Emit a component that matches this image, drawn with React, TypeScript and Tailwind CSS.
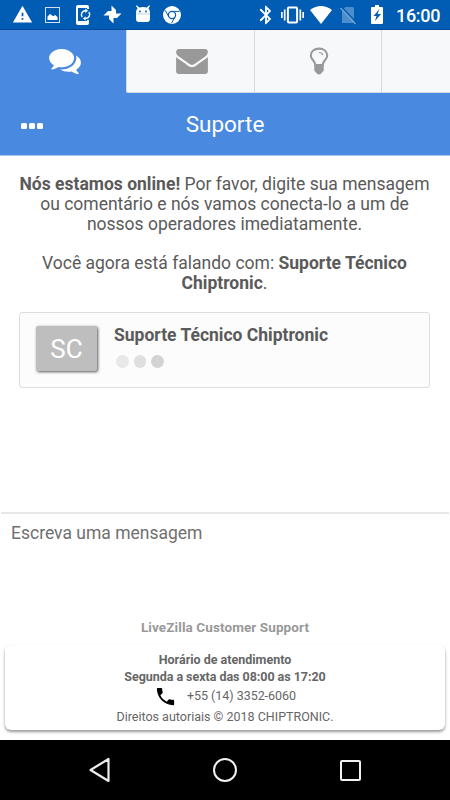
import React from "react";
import { MdWarning, MdBluetooth, MdPhone } from "react-icons/md";

function StatusBar() {
  return (
    <header className="flex h-[30px] shrink-0 items-start border-b border-[#00489a] bg-[#005db3] pl-[12px] pr-[8px] text-white">
      <MdWarning className="mt-[4px] size-[21px]" />
      <svg className="ml-[12px] mt-[7px] h-[16px] w-[15px]" viewBox="0 0 15 16">
        <rect x=".5" y=".5" width="14" height="15" fill="none" stroke="#cfe1f2" />
        <path d="M2.500 13V9.500L5 7l3.200 2.300 2-1.300 2.300 2v3z" fill="#fff" />
      </svg>
      <svg className="ml-[16px] mt-[5px] h-[20px] w-[16px]" viewBox="0 0 16 20">
        <path d="M2 0h9q2 0 2 2v2h-2V3H2v13h9v-1h2v3q0 2-2 2H2q-2 0-2-2V2Q0 0 2 0z" fill="#fff" />
        <path d="M6.200 12.200a4 4 0 0 1 3.500-6.400M12.800 7a4 4 0 0 1-3.500 6.500" fill="none" stroke="#fff" strokeWidth="1.400" />
        <path d="M9.300 3.600 12 5.800 9.300 8zM9.600 11.300v4.400L7 13.500z" fill="#fff" />
      </svg>
      <svg className="ml-[11px] mt-[5px] size-[19px]" viewBox="0 0 19 19" fill="#fff">
        <path d="M8.500 10V0.500L13 5V10z" />
        <path d="M8.500 10V0.500L13 5V10z" transform="rotate(90 9.500 9.500)" />
        <path d="M8.500 10V0.500L13 5V10z" transform="rotate(180 9.500 9.500)" />
        <path d="M8.500 10V0.500L13 5V10z" transform="rotate(270 9.500 9.500)" />
      </svg>
      <svg className="ml-[13px] mt-[5px] h-[17px] w-[16px]" viewBox="0 0 16 17">
        <path d="M1 7.500q0-2.500 1.500-4.200L1 .9l.8-.7 2.300 2.200q3.900-1 7.800 0L14.200.2l.8.700-1.500 2.400Q15 5 15 7.500V14q0 3-3 3H4q-3 0-3-3z" fill="#fff" />
        <circle cx="5" cy="6.500" r=".9" fill="#005db3" />
        <circle cx="11" cy="6.500" r=".9" fill="#005db3" />
        <path d="M1 9h14" stroke="#8fb8de" strokeWidth=".6" />
      </svg>
      <svg className="ml-[12px] mt-[6px] size-[18px]" viewBox="0 0 18 18">
        <circle cx="9" cy="9" r="9" fill="#fff" />
        <circle cx="9" cy="9" r="3.600" fill="#fff" stroke="#005db3" strokeWidth="1.200" />
        <path d="M9 5.400h7.500M5.900 10.800 2.200 4.400M12.100 10.800 8.500 17.200" stroke="#005db3" strokeWidth="1" />
      </svg>
      <span className="flex-1" />
      <MdBluetooth className="mt-[4px] size-[22px]" />
      <svg className="ml-[4px] mt-[6px] h-[18px] w-[23px]" viewBox="0 0 23 18">
        <rect x="6.900" y="1.500" width="9.200" height="15" rx="1" fill="none" stroke="#fff" strokeWidth="2" />
        <path d="M3.700 3.500v11M.8 6v6M19.300 3.500v11M22.200 6v6" stroke="#fff" strokeWidth="1.700" />
      </svg>
      <svg className="ml-[6px] mt-[6px] h-[18px] w-[22px]" viewBox="0 0 22 18">
        <path d="M0 4Q11-4 22 4L11 18z" fill="#fff" />
      </svg>
      <svg className="ml-[8px] mt-[6px] h-[19px] w-[17px]" viewBox="0 0 17 19">
        <path d="M2 4.500 5.500 1H12.500q1.500 0 1.500 1.500V16q0 1-1 1H2z" fill="#4d8dcb" />
        <path d="M1.500 1 17 17" stroke="#005db3" strokeWidth="1.500" />
        <path d="M.5 2 15.500 18" stroke="#71a5d7" strokeWidth="1.300" />
      </svg>
      <svg className="ml-[14px] mt-[5px] h-[19px] w-[12px]" viewBox="0 0 12 19">
        <path d="M1 2h3V0h4v2h3q1 0 1 1v15q0 1-1 1H1q-1 0-1-1V3q0-1 1-1z" fill="#fff" />
        <path d="M8.500 4 2.500 11h3L4 16l6-7H6.500z" fill="#005db3" />
      </svg>
      <span className="ml-[13px] mt-[5px] w-[46px] whitespace-nowrap text-[18px] font-medium leading-[21px] tracking-[-0.300px]">16:00</span>
    </header>
  );
}

function Tabs() {
  return (
    <nav className="flex h-[63px] shrink-0 bg-[#4a89e0]">
      <div className="flex w-[126px] justify-center pl-[3px] pt-[19px]">
        <svg className="h-[25px] w-[32px] text-white" viewBox="0 256 1792 1408" fill="currentColor">
          <path d="M1408 768q0 139-94 257t-256.500 186.500-353.500 68.500q-86 0-176-16-124 88-278 128-36 9-86 16h-3q-11 0-20.500-8t-11.500-21q-1-3-1-6.500t.5-6.500 2-6l2.500-5 3.500-5.500 4-5 4.500-5 4-4.500q5-6 23-25t26-29.500 22.500-29 25-38.500 20.500-44q-124-72-195-177t-71-224q0-139 94-257t256.500-186.500 353.500-68.500 353.500 68.500 256.500 186.500 94 257zm384 256q0 120-71 224.500t-195 176.500q10 24 20.500 44t25 38.500 22.500 29 26 29.500 23 25q1 1 4 4.500t4.500 5 4 5 3.500 5.500l2.500 5 2 6 .5 6.500-1 6.500q-3 14-13 22t-22 7q-50-7-86-16-154-40-278-128-90 16-176 16-271 0-472-132 58 4 88 4 161 0 309-45t264-129q125-92 192-212t67-254q0-77-23-152 129 71 204 178t75 230z" />
        </svg>
      </div>
      <div className="flex w-[129px] justify-center rounded-bl-[2px] border-b border-l border-r border-[#d5dae2] bg-[#f6f8fa] pt-[19px]">
        <svg className="ml-[3px] h-[25px] w-[32px] text-[#999]" viewBox="0 256 1792 1408" fill="currentColor">
          <path d="M1792 710v794q0 66-47 113t-113 47h-1472q-66 0-113-47t-47-113v-794q44 49 101 87 362 246 497 345 57 42 92.500 65.500t94.500 48 110 24.500h2q51 0 110-24.500t94.500-48 92.500-65.500q170-123 498-345 57-39 100-87zm0-294q0 79-49 151t-122 123q-376 261-468 325-10 7-42.500 31t-54 38.500-52 32.500-57.500 27-50 9h-2q-23 0-50-9t-57.500-27-52-32.500-54-38.500-42.500-31q-91-64-262-182.500t-205-142.500q-62-42-117-115.500t-55-136.500q0-78 41.500-130t118.500-52h1472q65 0 112.500 47t47.500 113z" />
        </svg>
      </div>
      <div className="flex w-[127px] justify-center border-b border-r border-[#d5dae2] bg-[#f6f8fa] pt-[17px]">
        <svg className="ml-[2px] h-[28px] w-[20px]" viewBox="0 0 20 28">
          <path d="M6.300 18C6.300 13.500 1.800 13 1.800 8.500C1.800 4.300 5.300 1.600 10 1.600s8.200 2.700 8.200 6.900c0 4.500-4.500 5-4.500 9.500z" fill="none" stroke="#999" strokeWidth="2.100" />
          <path d="M10 5.500q3.200 0 3.700 2.600" fill="none" stroke="#999" strokeWidth="1.200" />
          <path d="M5.300 17.500h9.400v6.300l-1.700 1.700q-1 2-3 2t-3-2l-1.700-1.700z" fill="#999" />
        </svg>
      </div>
      <div className="flex-1 border-b border-[#d5dae2] bg-[#f6f8fa]" />
    </nav>
  );
}

function TitleBar() {
  return (
    <div className="flex h-[63px] shrink-0 items-center border-b border-[#a5c4ef] bg-[#4a89e0] px-[21px] text-white">
      <div className="mt-[4px] flex w-[60px] gap-[2px]">
        <i className="size-[6px] rounded-[1.500px] bg-white" />
        <i className="size-[6px] rounded-[1.500px] bg-white" />
        <i className="size-[6px] rounded-[1.500px] bg-white" />
      </div>
      <h1 className="flex-1 pr-[60px] text-center text-[22.500px] leading-[30px]">Suporte</h1>
    </div>
  );
}

function Conversation() {
  return (
    <main className="flex h-[356px] shrink-0 flex-col px-[19px] pt-[18px] text-[#5a5a5a]">
      <div className="flex flex-col items-center whitespace-nowrap pr-[1px] text-[17.500px] leading-[20px]">
        <p>
          <b>Nós estamos online!</b> Por favor, digite sua mensagem
        </p>
        <p>ou comentário e nós vamos conecta-lo a um de</p>
        <p>nossos operadores imediatamente.</p>
        <p className="mt-[19px]">
          Você agora está falando com: <b>Suporte Técnico</b>
        </p>
        <p>
          <b>Chiptronic</b>.
        </p>
      </div>
      <section className="mt-[19px] flex h-[76px] w-[411px] shrink-0 rounded-[3px] border border-[#dedede] bg-[#fcfcfc] pl-[16px] pt-[13px]">
        <div className="flex h-[45px] w-[61px] items-center justify-center rounded-[2px] bg-[#bebebe] pt-[1px] text-[26px] text-white shadow-[1px_1px_3px_#555]">SC</div>
        <div className="ml-[17px]">
          <h2 className="-mt-px whitespace-nowrap text-[17.500px] font-bold leading-[20px]">Suporte Técnico Chiptronic</h2>
          <div className="ml-[2px] mt-[10px] flex gap-[5px]">
            <i className="size-[12.500px] rounded-full bg-[#e8e8e8]" />
            <i className="size-[12.500px] rounded-full bg-[#dfdfdf]" />
            <i className="size-[12.500px] rounded-full bg-[#d3d3d3]" />
          </div>
        </div>
      </section>
    </main>
  );
}

function Footer() {
  return (
    <footer className="flex h-[228px] shrink-0 flex-col items-center whitespace-nowrap text-[#666]">
      <div className="h-[2px] w-[448px] shrink-0 bg-[#e8e8e8]" />
      <div className="h-[104px] w-full shrink-0 pl-[11px] pt-[9px] text-[17.500px] leading-[20px] text-[#707070]">Escreva uma mensagem</div>
      <p className="text-[13.500px] font-bold leading-[18px] tracking-[0.100px] text-[#999]">LiveZilla Customer Support</p>
      <div className="mt-[9px] flex h-[85px] w-[440px] shrink-0 flex-col items-center rounded-[6px] bg-white pt-[6px] text-[12.500px] shadow-[0_2px_3px_#999]">
        <p className="font-bold leading-[17px]">Horário de atendimento</p>
        <p className="font-bold leading-[18px] tracking-[-0.040px]">Segunda a sexta das 08:00 as 17:20</p>
        <div className="flex h-[21px] items-center">
          <MdPhone className="mr-[10px] size-[23px] text-black" />
          <span className="tracking-[-0.040px]">+55 (14) 3352-6060</span>
        </div>
        <p className="leading-[20px]">Direitos autoriais © 2018 CHIPTRONIC.</p>
      </div>
    </footer>
  );
}

export default function App() {
  return (
    <div className="flex h-[800px] w-[450px] flex-col overflow-hidden bg-white font-['Roboto',sans-serif]">
      <StatusBar />
      <Tabs />
      <TitleBar />
      <Conversation />
      <Footer />
      <div className="flex h-[60px] shrink-0 items-center justify-between bg-black pl-[87px] pr-[89px]">
        <svg className="h-[26px] w-[23px]" viewBox="0 0 23 26">
          <path d="M21.500 2v22L3.500 13z" fill="none" stroke="#ececec" strokeWidth="2.200" strokeLinejoin="round" />
        </svg>
        <i className="size-[24px] rounded-full border-2 border-[#f2f2f2]" />
        <i className="size-[21px] rounded-[2px] border-2 border-[#f2f2f2]" />
      </div>
    </div>
  );
}
